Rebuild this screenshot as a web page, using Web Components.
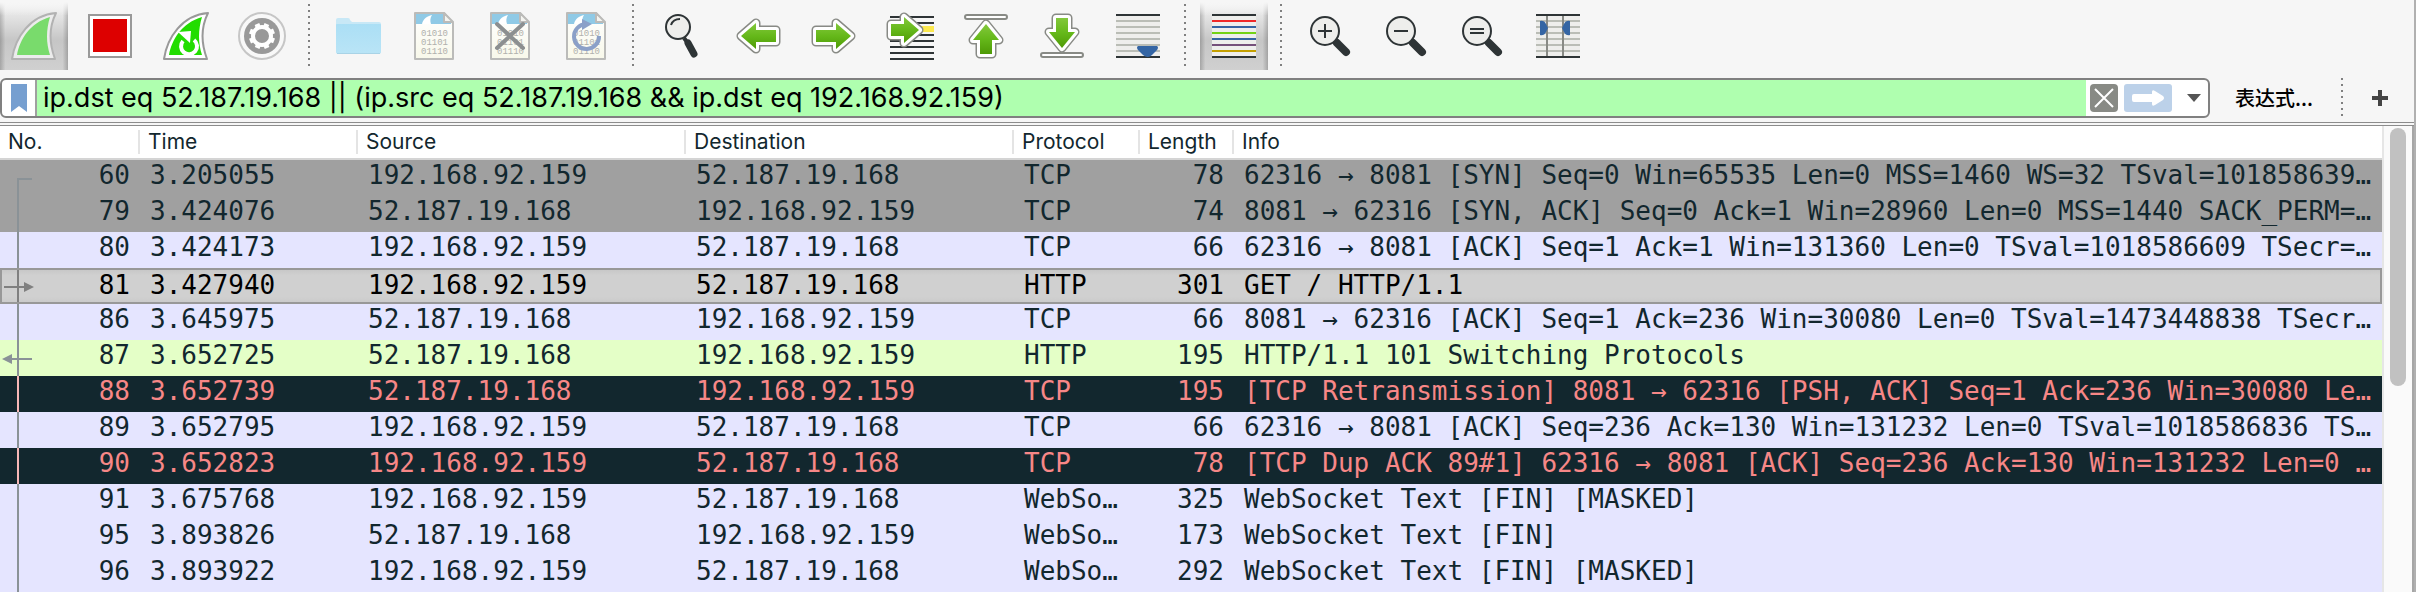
<!DOCTYPE html>
<html lang="zh-CN">
<head>
<meta charset="utf-8">
<title>Packet capture</title>
<style>
  html, body { margin: 0; height: 100%; }
  body { background: #f6f6f6; overflow: hidden; font-family: Inter, "Noto Sans CJK SC", sans-serif; color: #000; }
</style>
</head>
<body>
<capture-window></capture-window>
<script>
const define = (name, html, setup) => customElements.define(name, class extends HTMLElement {
  constructor() {
    super();
    this.attachShadow({ mode: 'open' }).innerHTML = html;
  }
  connectedCallback() { if (setup && !this.ready) { this.ready = true; setup(this, this.shadowRoot); } }
});

const finOuter = 'M2 47C5 26 20 3 46 1C39 15 39 31 45 47Z';
const finInner = 'M7 43C10 27 20 11 40 5C36 18 36 31 40 43Z';
const line = (y, color, x = 2, w = 44) => `<rect x="${x}" y="${y}" width="${w}" height="2" fill="${color}"/>`;
const arrow = d => `
  <path d="${d}" fill="none" stroke="#888a85" stroke-width="9" stroke-linejoin="round"/>
  <path d="${d}" fill="url(#g)" stroke="#fff" stroke-width="6" stroke-linejoin="round"/>
  <path d="${d}" fill="url(#g)"/>`;
const page = `
  <path d="M5 1H34L43 11V47H5Z" fill="url(#p)" stroke="#bbbbb9" stroke-width="2" stroke-linejoin="round"/>
  <path d="M6 2H33L41 10V12H6Z" fill="#90cae6"/>
  <path d="M12 12C13 7 17 4 22 3C20 6 20 9 21 12Z" fill="#fff"/>
  <path d="M34 1V10H43Z" fill="#f4f4f0" stroke="#bbbbb9" stroke-width="2" stroke-linejoin="round"/>
  <g font-family="Liberation Mono, monospace" font-size="9" fill="#b0b0ac">
    <text x="11" y="24">01010</text><text x="11" y="33">01101</text><text x="11" y="42">01110</text>
  </g>`;
const lens = inner => `
  <path d="M31 31L40 40" stroke="#2e3436" stroke-width="8" stroke-linecap="round"/>
  <circle cx="19" cy="19" r="14" fill="#eeeeec" stroke="#2e3436" stroke-width="2"/>
  <g fill="#2e3436">${inner}</g>`;
const textLines = [8, 14, 20, 26, 32, 38].map(y => line(y, '#babdb6')).join('');

const icons = {
  start: `<path d="${finOuter}" fill="#ececec" stroke="#b2b2b2" stroke-width="2" stroke-linejoin="round"/><path d="${finInner}" fill="#79db6c"/>`,
  stop: `<rect x="3" y="3" width="42" height="42" fill="#fff" stroke="#999" stroke-width="2"/><rect x="7" y="7" width="34" height="33" fill="#d00"/>`,
  restart: `<path d="${finOuter}" fill="#fff" stroke="#999" stroke-width="2" stroke-linejoin="round"/><path d="${finInner}" fill="#2d0"/>
    <path d="M32 28A8 8 0 1 1 21 29" fill="none" stroke="#fff" stroke-width="4"/><path d="M16 20L29 19L28 31Z" fill="#fff"/>`,
  options: `<circle cx="24" cy="24" r="23" fill="#f8f8f8" stroke="#c6c6c6" stroke-width="2"/><circle cx="24" cy="24" r="18" fill="#999"/>
    <circle cx="24" cy="24" r="9" fill="none" stroke="#fff" stroke-width="4"/>
    <g stroke="#fff" stroke-width="5">${[0, 45, 90, 135].map(a => `<path d="M24 11V15M24 33V37" transform="rotate(${a + 22} 24 24)"/>`).join('')}</g>`,
  open: `<path d="M2 8Q2 6 4 6H14Q16 6 16 8L18 10H45Q47 10 47 12V40Q47 42 45 42H4Q2 42 2 40Z" fill="#c8e8f6"/>
    <rect x="2" y="12" width="45" height="29" rx="1" fill="url(#f)"/><path d="M3 41.500H46" stroke="#a9d3e6"/>`,
  save: page,
  close: page + `<path d="M11 12L37 36M37 12L11 36" stroke="#8c8f90" stroke-width="4" stroke-linecap="round"/>`,
  reload: page + `<path d="M24 12A12.500 12.500 0 1 0 37 24" fill="none" stroke="#8ba0c8" stroke-width="4"/><path d="M20 7L30 12L20 18Z" fill="#8ba0c8"/>`,
  find: `<path d="M26 26L29 30" stroke="#2e3436" stroke-width="4"/><path d="M30 31L36 42" stroke="#2e3436" stroke-width="7" stroke-linecap="round"/>
    <circle cx="20" cy="15" r="12" fill="#eeeeec" stroke="#2e3436" stroke-width="2"/>
    <path d="M13 13Q15 7 22 7" fill="none" stroke="#2e3436" stroke-width="2"/>`,
  back: arrow('M7 24L22 11V18H42V30H22V37Z'),
  forward: arrow('M41 24L26 11V18H6V30H26V37Z'),
  goto: [4, 10, 22, 28, 34, 40, 46].map(y => line(y, '#2e3436', 4)).join('') + '<rect x="34" y="14" width="14" height="6" fill="#fce94f"/>' + arrow('M33 18L18 5V12H5V24H18V31Z'),
  first: `<rect x="3" y="3" width="42" height="4" rx="2" fill="#fff" stroke="#888a85" stroke-width="2"/>` + arrow('M24 12L37 28H30V42H18V28H11Z'),
  last: `<rect x="3" y="41" width="42" height="4" rx="2" fill="#fff" stroke="#888a85" stroke-width="2"/>` + arrow('M24 36L37 20H30V6H18V20H11Z'),
  scroll: `<rect x="2" y="2" width="44" height="44" fill="#eeeeec"/>${line(2, '#2e3436')}${textLines}${line(44, '#2e3436')}
    <path d="M24 34H43Q45 35 43 38L38 43Q34 47 29 43L24 38Q22 35 24 34Z" fill="#3465a4"/>`,
  colorize: '<rect x="2" y="2" width="44" height="44" fill="#eeeeec"/>' + ['#2e3436', '#ef2929', '#3465a4', '#73d216', '#3465a4', '#75507b', '#c4a000', '#2e3436'].map((c, i) => line(2 + i * 6, c)).join(''),
  zoomin: lens('<rect x="12" y="18" width="14" height="2"/><rect x="18" y="12" width="2" height="14"/>'),
  zoomout: lens('<rect x="12" y="18" width="14" height="2"/>'),
  zoomreset: lens('<rect x="12" y="16" width="14" height="2"/><rect x="12" y="20" width="14" height="2"/>'),
  resize: `<rect x="2" y="2" width="44" height="44" fill="#eeeeec"/>${line(2, '#2e3436')}${textLines}${line(44, '#2e3436')}
    <path d="M13 4V44M29 4V44" stroke="#888a85" stroke-width="2"/>
    <path d="M6 9Q10 8 12 12L14 16L12 20Q10 24 6 23ZM36 9Q32 8 30 12L28 16L30 20Q32 24 36 23Z" fill="#3465a4"/>`
};

define('tool-button', `
<style>
  :host { display: block; flex: none; }
  button { display: grid; place-items: center; width: 68px; height: 68px; margin: 0; padding: 0; border: 0; background: none; }
  :host([pressed]) button {
    background: linear-gradient(#f6f6f6, #f6f6f600 20%), linear-gradient(90deg, #0003, #0000 8%, #0000 92%, #0003), linear-gradient(#f4f4f4, #dcdcdc 30%, #c6c6c6 56%, #d0d0d0);
  }
  svg { display: block; width: 48px; height: 48px; }
</style>
<button type="button"><svg viewBox="0 0 48 48" aria-hidden="true"></svg></button>`, (host, root) => {
  const name = host.getAttribute('icon');
  root.querySelector('button').setAttribute('aria-label', name);
  root.querySelector('svg').innerHTML = `<defs>
    <linearGradient id="g" x2="0" y2="1"><stop stop-color="#83c83c"/><stop offset=".5" stop-color="#65b81a"/><stop offset="1" stop-color="#4e9a06"/></linearGradient>
    <linearGradient id="p" x2="0" y2="1"><stop stop-color="#fff"/><stop offset="1" stop-color="#f8f8ea"/></linearGradient>
    <linearGradient id="f" x2="0" y2="1"><stop stop-color="#abdff5"/><stop offset="1" stop-color="#b9e4f6"/></linearGradient></defs>` + icons[name];
});

define('tool-separator', `
<style>
  :host { display: block; flex: none; width: 12px; align-self: stretch; }
  div { width: 2px; height: calc(100% - 4px); margin: 2px 0 2px 4px; background: repeating-linear-gradient(#808080 0 2px, #0000 2px 6px); }
</style>
<div></div>`);

define('tool-bar', `
<style>
  :host { display: flex; gap: 8px; padding: 2px 0; }
</style>
<slot></slot>`);

define('filter-bar', `
<style>
  :host { display: flex; align-items: center; height: 44px; }
  .box { box-sizing: border-box; flex: 1; display: flex; align-items: center; height: 40px; border: 2px solid #808080; border-radius: 6px; background: #fff; overflow: hidden; }
  button { flex: none; display: block; margin: 0; padding: 0; border: 0; background: none; font: inherit; color: inherit; }
  svg { display: block; }
  .mark { padding: 0 7px 0 8px; border-right: 2px solid #a0a0a0; height: 36px; }
  input { flex: 1; min-width: 0; box-sizing: border-box; height: 36px; margin: 0; padding: 0 6px 2px; border: 0; outline: 0; background: #afffaf; color: #000; font: 27px Inter, sans-serif; }
  .clear { margin: 0 6px 0 4px; }
  .menu { margin: 0 7px 0 15px; }
  .expr { margin: 0 24px 0 25px; font: 500 20px/28px "Noto Sans CJK SC", sans-serif; }
  .plus { margin: 0 26px 0 23px; }
</style>
<div class="box">
  <button class="mark" type="button" aria-label="Bookmarks"><svg width="18" height="36" viewBox="0 0 18 36"><path d="M1 4H17V32L9 26L1 32Z" fill="#769fd0"/></svg></button>
  <input type="text" aria-label="Display filter" value="ip.dst eq 52.187.19.168 || (ip.src eq 52.187.19.168 &amp;&amp; ip.dst eq 192.168.92.159)" spellcheck="false">
  <button class="clear" type="button" aria-label="Clear"><svg width="28" height="28" viewBox="0 0 28 28"><rect width="28" height="28" rx="4" fill="#888a85"/><path d="M5 5L23 23M23 5L5 23" stroke="#fff" stroke-width="2"/></svg></button>
  <button type="button" aria-label="Apply"><svg width="48" height="28" viewBox="0 0 48 28"><rect width="48" height="28" rx="3" fill="#bcd1e9"/><path d="M10 10H28V8Q28 5 31 7L39 12Q41 14 39 16L31 21Q28 23 28 20V18H10Q8 18 8 16V12Q8 10 10 10Z" fill="#fff"/></svg></button>
  <button class="menu" type="button" aria-label="History"><svg width="14" height="8" viewBox="0 0 14 8"><path d="M0 0H14L7 8Z" fill="#555"/></svg></button>
</div>
<button class="expr" type="button">表达式...</button>
<tool-separator></tool-separator>
<button class="plus" type="button" aria-label="Add"><svg width="16" height="16" viewBox="0 0 16 16"><path d="M6 0H10V6H16V10H10V16H6V10H0V6H6Z" fill="#444"/></svg></button>`);

const packets = [
  ['60', '3.205055', 'A', 'TCP', '78', '62316 → 8081 [SYN] Seq=0 Win=65535 Len=0 MSS=1460 WS=32 TSval=101858639…', 'syn', 'M32 19H18V36'],
  ['79', '3.424076', 'B', 'TCP', '74', '8081 → 62316 [SYN, ACK] Seq=0 Ack=1 Win=28960 Len=0 MSS=1440 SACK_PERM=…', 'syn'],
  ['80', '3.424173', 'A', 'TCP', '66', '62316 → 8081 [ACK] Seq=1 Ack=1 Win=131360 Len=0 TSval=1018586609 TSecr=…', 'tcp'],
  ['81', '3.427940', 'A', 'HTTP', '301', 'GET / HTTP/1.1', 'selected', 'M18 0V36M4 19H26', 'M24 14L34 19L24 24Z'],
  ['86', '3.645975', 'B', 'TCP', '66', '8081 → 62316 [ACK] Seq=1 Ack=236 Win=30080 Len=0 TSval=1473448838 TSecr…', 'tcp'],
  ['87', '3.652725', 'B', 'HTTP', '195', 'HTTP/1.1 101 Switching Protocols', 'http', 'M18 0V36M10 19H32', 'M12 14L2 19L12 24Z'],
  ['88', '3.652739', 'B', 'TCP', '195', '[TCP Retransmission] 8081 → 62316 [PSH, ACK] Seq=1 Ack=236 Win=30080 Le…', 'bad'],
  ['89', '3.652795', 'A', 'TCP', '66', '62316 → 8081 [ACK] Seq=236 Ack=130 Win=131232 Len=0 TSval=1018586836 TS…', 'tcp'],
  ['90', '3.652823', 'A', 'TCP', '78', '[TCP Dup ACK 89#1] 62316 → 8081 [ACK] Seq=236 Ack=130 Win=131232 Len=0 …', 'bad'],
  ['91', '3.675768', 'A', 'WebSo…', '325', 'WebSocket Text [FIN] [MASKED]', 'tcp'],
  ['95', '3.893826', 'B', 'WebSo…', '173', 'WebSocket Text [FIN]', 'tcp'],
  ['96', '3.893922', 'A', 'WebSo…', '292', 'WebSocket Text [FIN] [MASKED]', 'tcp']
];

define('packet-list', `
<style>
  :host { display: block; min-width: 0; background: #e5e5ff; }
  table { width: 100%; table-layout: fixed; border-collapse: separate; border-spacing: 0; }
  .no { width: 140px; } .time { width: 218px; } .addr { width: 328px; } .proto { width: 126px; } .len { width: 94px; }
  th { box-sizing: border-box; height: 34px; padding: 0; border-bottom: 2px solid #d4d4d4; background: #fff; text-align: left; font: 21px/24px Inter, sans-serif; }
  th span { display: block; padding-left: 8px; border-right: 2px solid #e4e4e4; }
  th:last-child span { border: 0; }
  td { box-sizing: border-box; height: 36px; padding: 0 10px 6px; font: 26px/30px "DejaVu Sans Mono", monospace; white-space: pre; overflow: hidden; }
  td:first-child { padding: 0 10px 0 0; }
  td:nth-child(6) { text-align: right; }
  td:last-child { padding-right: 8px; }
  .first { display: flex; justify-content: space-between; height: 36px; }
  svg { display: block; width: 36px; height: 36px; color: #8a9297; }
  tr { color: #12272e; }
  .syn { background: #a0a0a0; }
  .http { background: #e4ffc7; }
  .bad { background: #12272e; color: #f78787; }
  .bad svg { color: #f7b7b7; }
  .selected { background: linear-gradient(#c4c4c4, #d0d0d0 20% 80%, #c8c8c8); color: #000; }
  .selected svg { color: #808080; margin-top: -2px; margin-left: -2px; }
  .selected td { padding-bottom: 2px; border: solid #989898; border-width: 2px 0; }
  .selected td:first-child { padding-bottom: 0; border-left-width: 2px; }
  .selected td:last-child { border-right-width: 2px; }
  .selected .first { height: 32px; }
</style>
<table>
  <colgroup><col class="no"><col class="time"><col class="addr"><col class="addr"><col class="proto"><col class="len"><col></colgroup>
  <thead><tr><th><span>No.</span></th><th><span>Time</span></th><th><span>Source</span></th><th><span>Destination</span></th><th><span>Protocol</span></th><th><span>Length</span></th><th><span>Info</span></th></tr></thead>
  <tbody></tbody>
</table>`, (host, root) => {
  const A = '192.168.92.159', B = '52.187.19.168';
  root.querySelector('tbody').innerHTML = packets.map(([no, time, from, proto, len, info, kind, path = 'M18 0V36', head = '']) => `
    <tr class="${kind}"><td><div class="first"><svg viewBox="0 0 36 36" aria-hidden="true"><path d="${path}" fill="none" stroke="currentColor" stroke-width="2"/><path d="${head}" fill="currentColor"/></svg><span>${no}</span></div></td>` +
    [time, from === 'A' ? A : B, from === 'A' ? B : A, proto, len, info].map(t => `<td>${t}</td>`).join('') + '</tr>').join('');
});

define('scroll-track', `
<style>
  :host { box-sizing: border-box; display: block; width: 32px; padding: 2px 6px; border-left: 2px solid #e6e6e6; border-right: 2px solid #a6a6a6; background: #fafafa; }
  div { width: 16px; height: 258px; border-radius: 8px; background: #c1c1c1; }
</style>
<div></div>`);

define('capture-window', `
<style>
  :host { box-sizing: border-box; display: flex; flex-direction: column; min-height: 100vh; border-right: 2px solid #b0b0b0; background: #f6f6f6; }
  .pane { flex: 1; display: grid; grid-template-columns: minmax(0, 1fr) auto; border-top: 4px double #8c8c8c; }
  filter-bar { padding: 4px 0 2px; }
</style>
<tool-bar>
  <tool-button icon="start" pressed></tool-button><tool-button icon="stop"></tool-button><tool-button icon="restart"></tool-button><tool-button icon="options"></tool-button>
  <tool-separator></tool-separator>
  <tool-button icon="open"></tool-button><tool-button icon="save"></tool-button><tool-button icon="close"></tool-button><tool-button icon="reload"></tool-button>
  <tool-separator></tool-separator>
  <tool-button icon="find"></tool-button><tool-button icon="back"></tool-button><tool-button icon="forward"></tool-button><tool-button icon="goto"></tool-button><tool-button icon="first"></tool-button><tool-button icon="last"></tool-button><tool-button icon="scroll"></tool-button>
  <tool-separator></tool-separator>
  <tool-button icon="colorize" pressed></tool-button>
  <tool-separator></tool-separator>
  <tool-button icon="zoomin"></tool-button><tool-button icon="zoomout"></tool-button><tool-button icon="zoomreset"></tool-button><tool-button icon="resize"></tool-button>
</tool-bar>
<filter-bar></filter-bar>
<div class="pane"><packet-list></packet-list><scroll-track></scroll-track></div>`);
</script>
</body>
</html>
